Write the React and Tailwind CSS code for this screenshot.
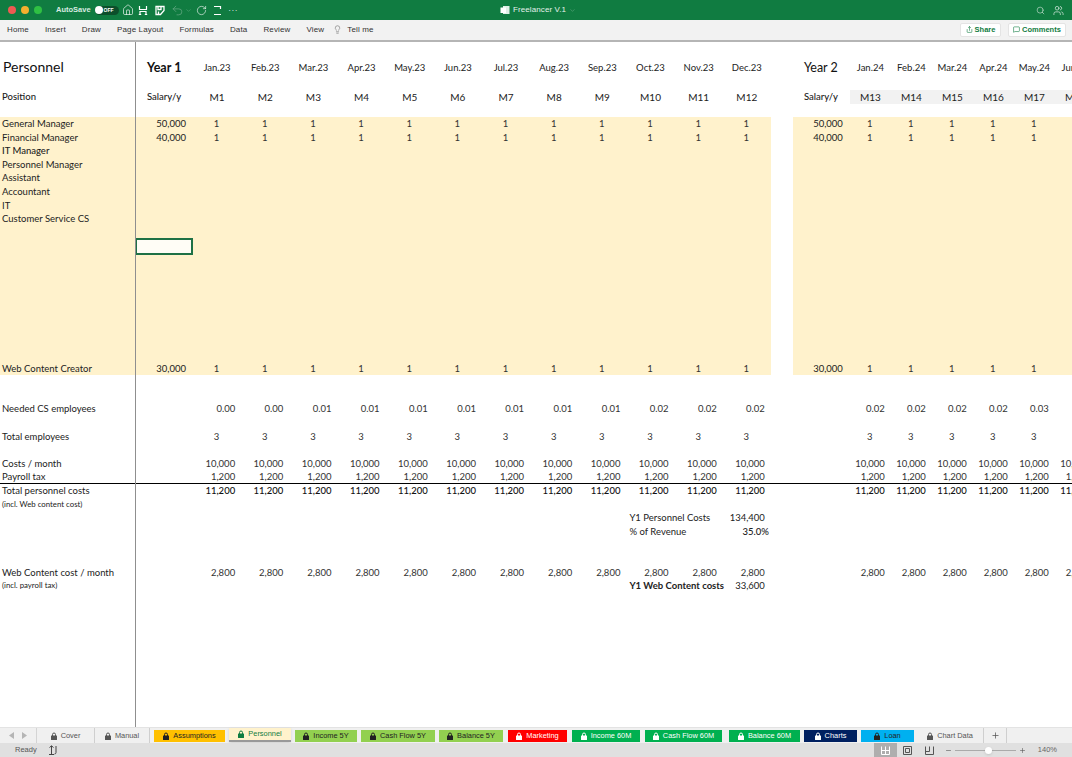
import React from "react";
import { Home, Undo2, RotateCw, ChevronDown, Search, Lightbulb, Plus, Minus, Share, MessageSquare, Users } from "lucide-react";

const y1Months = ["Jan.23", "Feb.23", "Mar.23", "Apr.23", "May.23", "Jun.23", "Jul.23", "Aug.23", "Sep.23", "Oct.23", "Nov.23", "Dec.23"];
const y2Months = ["Jan.24", "Feb.24", "Mar.24", "Apr.24", "May.24", "Jun.24"];
const ribbon = ["Home", "Insert", "Draw", "Page Layout", "Formulas", "Data", "Review", "View"];

const needed1 = ["0.00", "0.00", "0.01", "0.01", "0.01", "0.01", "0.01", "0.01", "0.01", "0.02", "0.02", "0.02"];
const needed2 = ["0.02", "0.02", "0.02", "0.02", "0.03", ""];

const gridCols = "grid grid-cols-[57px_repeat(12,48.17px)_22px_57px_repeat(6,41px)]";

const labels = [
  { text: "General Manager", yellow: true, salary: "50,000", ones: true },
  { text: "Financial Manager", yellow: true, salary: "40,000", ones: true },
  { text: "IT Manager", yellow: true, medium: true },
  { text: "Personnel Manager", yellow: true },
  { text: "Assistant", yellow: true },
  { text: "Accountant", yellow: true },
  { text: "IT", yellow: true },
  { text: "Customer Service CS", yellow: true },
  { yellow: true },
  { yellow: true, selected: true },
  ...Array.from({ length: 8 }, () => ({ yellow: true })),
  { text: "Web Content Creator", yellow: true, salary: "30,000", ones: true },
  {},
  {},
  { text: "Needed CS employees", y1: needed1, y2: needed2 },
  {},
  { text: "Total employees", fill: "3", center: true },
  {},
  { text: "Costs / month", fill: "10,000" },
  { text: "Payroll tax", fill: "1,200", line: true },
  { text: "Total personnel costs", fill: "11,200", strong: true },
  { text: "(incl. Web content cost)", small: true },
  { summary: ["Y1 Personnel Costs", "134,400"], medium: true },
  { summary: ["% of Revenue", "35.0%"], wide: true },
  {},
  {},
  { text: "Web Content cost / month", fill: "2,800" },
  { text: "(incl. payroll tax)", small: true, summary: ["Y1 Web Content costs", "33,600"], strongSummary: true },
];

const tabs = [
  { name: "Cover", w: "w-[58px]", ml: "ml-0", bg: "", text: "text-[#555]", border: "border-r border-[#cfcfcf]" },
  { name: "Manual", w: "w-[55px]", ml: "ml-0", bg: "", text: "text-[#555]", border: "border-r border-[#cfcfcf]" },
  { name: "Assumptions", w: "w-[71px]", ml: "ml-[4px]", bg: "bg-[#ffc000]", text: "text-[#222]" },
  { name: "Personnel", w: "w-[62px]", ml: "ml-[4px]", bg: "bg-[#fff2cc]", text: "text-[#107c41]", active: true },
  { name: "Income 5Y", w: "w-[62px]", ml: "ml-[4px]", bg: "bg-[#92d050]", text: "text-[#222]" },
  { name: "Cash Flow 5Y", w: "w-[74px]", ml: "ml-[4px]", bg: "bg-[#92d050]", text: "text-[#222]" },
  { name: "Balance 5Y", w: "w-[64px]", ml: "ml-[4px]", bg: "bg-[#92d050]", text: "text-[#222]" },
  { name: "Marketing", w: "w-[59px]", ml: "ml-[5px]", bg: "bg-[#ff0000]", text: "text-white" },
  { name: "Income 60M", w: "w-[68px]", ml: "ml-[5px]", bg: "bg-[#00b050]", text: "text-white" },
  { name: "Cash Flow 60M", w: "w-[77px]", ml: "ml-[5px]", bg: "bg-[#00b050]", text: "text-white" },
  { name: "Balance 60M", w: "w-[71px]", ml: "ml-[7px]", bg: "bg-[#00b050]", text: "text-white" },
  { name: "Charts", w: "w-[53px]", ml: "ml-[4px]", bg: "bg-[#002060]", text: "text-white" },
  { name: "Loan", w: "w-[53px]", ml: "ml-[4px]", bg: "bg-[#00b0f0]", text: "text-[#222]" },
  { name: "Chart Data", w: "w-[67px]", ml: "ml-[3px]", bg: "", text: "text-[#555]", border: "border-r border-[#cfcfcf]" },
];

const TabLock = () => (
  <svg width="6" height="8" viewBox="0 0 6 8" className="shrink-0">
    <path d="M1.500 4V2.500a1.500 1.500 0 0 1 3 0V4" fill="none" stroke="currentColor" strokeWidth="1" />
    <rect x="0" y="3.500" width="6" height="4.500" rx="0.5" fill="currentColor" />
  </svg>
);

const TitleBar = () => (
  <div className="h-[20px] bg-[#107c41] flex items-center text-white shrink-0 relative">
    <div className="flex items-center gap-[5px] pl-[8px]">
      <span className="w-[8px] h-[8px] rounded-full bg-[#ee5a52]" />
      <span className="w-[8px] h-[8px] rounded-full bg-[#f5b02e]" />
      <span className="w-[8px] h-[8px] rounded-full bg-[#2fc043]" />
    </div>
    <span className="ml-[14px] text-[7.5px] font-bold text-[#d8ebe0]">AutoSave</span>
    <div className="ml-[4px] w-[24px] h-[9px] rounded-full bg-[#0c4f2b] flex items-center">
      <span className="w-[8px] h-[8px] rounded-full bg-white" />
      <span className="ml-[1px] text-[5px] font-bold leading-none">OFF</span>
    </div>
    <Home className="ml-[3px]" size={12} strokeWidth={1.3} />
    <svg className="ml-[4px]" width="10" height="11" viewBox="0 0 10 11" fill="none" stroke="white" strokeWidth="1.2">
      <path d="M1.500 1v3.500h7V1M2 9.500V6.500h6v3M.8 9.500h2.400M6.800 9.500h2.400" />
    </svg>
    <svg className="ml-[7px]" width="10" height="11" viewBox="0 0 10 11" fill="none" stroke="white" strokeWidth="1.3">
      <path d="M1 1.500h8v4L5.500 9.500H1zM3 1.500v3h3v-3M3.500 9V6.500" />
    </svg>
    <Undo2 className="ml-[6px] text-[#6fae8c]" size={13} strokeWidth={1.2} />
    <ChevronDown className="ml-[1px] text-[#6fae8c]" size={7} strokeWidth={1.5} />
    <RotateCw className="ml-[4px]" size={11} strokeWidth={1.3} />
    <svg className="ml-[6px]" width="9" height="11" viewBox="0 0 9 11" fill="none" stroke="white" strokeWidth="1.2">
      <path d="M1 1.500h6.500v2.500M1 9.500h7" />
    </svg>
    <span className="ml-[7px] text-[8px] leading-none tracking-[1px] -mt-[3px]">...</span>
    <div className="absolute left-[500px] top-0 h-full flex items-center gap-[3px]">
      <svg width="10" height="10" viewBox="0 0 10 10">
        <rect x="3" y="1" width="6.5" height="8" fill="#dff0e6" />
        <rect x="0.5" y="2.5" width="5.5" height="5.5" fill="#ffffff" />
      </svg>
      <span className="text-[8px] text-[#e4f1ea] tracking-[0.1px]">Freelancer V.1</span>
      <ChevronDown className="text-[#5fa57f]" size={7} />
    </div>
    <div className="ml-auto flex items-center gap-[8px] pr-[8px]">
      <Search size={9} strokeWidth={1.3} />
      <Users size={11} strokeWidth={1.3} />
    </div>
  </div>
);

const Ribbon = () => (
  <div className="h-[22px] bg-[#f2f2f2] border-b-2 border-[#b5b5b5] flex items-center pb-[1px] pl-[7px] pr-[6px] shrink-0">
    <div className="flex items-center gap-[16px] text-[8px] tracking-[0.14px] text-[#333]">
      {ribbon.map((name) => (
        <span key={name}>{name}</span>
      ))}
    </div>
    <Lightbulb className="ml-[9px] text-[#555]" size={9} strokeWidth={1.3} />
    <span className="ml-[5px] text-[8px] tracking-[0.14px] text-[#333]">Tell me</span>
    <div className="ml-auto flex items-center gap-[7px] text-[7.5px] text-[#107c41] font-bold">
      <div className="w-[41px] h-[14px] bg-white rounded-[2px] border border-[#e4e4e4] flex items-center justify-center gap-[2px]">
        <Share size={7} />
        Share
      </div>
      <div className="w-[58px] h-[14px] bg-white rounded-[2px] border border-[#e4e4e4] flex items-center justify-center gap-[2px]">
        <MessageSquare size={7} />
        Comments
      </div>
    </div>
  </div>
);

const HeaderRows = () => (
  <div className={gridCols}>
    <div className="h-[48px] pl-[11px] pt-[20px] text-[12.5px] font-bold text-[#111] leading-none">Year 1</div>
    {y1Months.map((m) => (
      <div key={m} className="h-[48px] pt-[21px] text-center text-[9.5px] text-[#222] leading-none">{m}</div>
    ))}
    <div />
    <div className="h-[48px] pl-[11px] pt-[20px] text-[12.5px] text-[#111] leading-none">Year 2</div>
    {y2Months.map((m) => (
      <div key={m} className="h-[48px] pt-[21px] text-center text-[9.5px] text-[#222] leading-none whitespace-nowrap">{m}</div>
    ))}
    <div className="h-[14px] pl-[11px] text-[9.5px] leading-[14px] text-[#222] font-medium">Salary/y</div>
    {y1Months.map((m, i) => (
      <div key={m} className="h-[14px] text-center text-[10px] leading-[14px] text-[#222]">M{i + 1}</div>
    ))}
    <div />
    <div className="h-[14px] pl-[11px] text-[9.5px] leading-[14px] text-[#222] font-medium">Salary/y</div>
    {y2Months.map((m, i) => (
      <div key={m} className="h-[14px] bg-[#f2f2f2] text-center text-[10px] leading-[14px] text-[#222]">M{i + 13}</div>
    ))}
  </div>
);

// a cell in one of the month columns
const Cell = ({ row, value }) => {
  const bg = row.yellow ? "bg-[#fff2cc]" : "";
  const font = row.strong ? "font-medium text-[#111]" : "text-[#333]";
  if (row.ones || row.center) {
    return <div className={`${bg} ${font} text-center pr-[1px]`}>{value}</div>;
  }
  return <div className={`${bg} ${font} text-right pr-[6px] whitespace-nowrap`}>{value}</div>;
};

const SheetRow = ({ row }) => {
  const yellow = row.yellow ? "bg-[#fff2cc]" : "";
  const line = row.line ? "border-b border-black" : "";
  const val1 = (i) => (row.y1 ? row.y1[i] : row.ones ? "1" : row.fill || "");
  const val2 = (i) => (row.y2 ? row.y2[i] : row.ones ? "1" : row.fill || "");
  const isMonthRow = row.ones || row.fill || row.y1;

  return (
    <div className={`${gridCols} h-[13.6px] text-[9.5px] leading-[13px] box-border ${line}`}>
      <div className={`${yellow} relative text-right pr-[7px] text-[#222]`}>
        {row.salary}
        {row.selected && (
          <div className="absolute -left-px right-0 top-[-1px] bottom-[-2px] bg-[#fffdf6] border-2 border-[#1e7145] z-10" />
        )}
      </div>
      {row.summary ? (
        <>
          {Array.from({ length: 9 }, (_, i) => <div key={i} />)}
          <div className={`col-span-2 pl-[3px] whitespace-nowrap text-[#222] ${row.strongSummary ? "font-bold" : ""}`}>{row.summary[0]}</div>
          <div className={`text-right text-[#222] whitespace-nowrap ${row.wide ? "pr-[2px] font-medium" : "pr-[6px]"}`}>{row.summary[1]}</div>
        </>
      ) : (
        y1Months.map((m, i) => <Cell key={m} row={row} value={isMonthRow ? val1(i) : ""} />)
      )}
      <div />
      <div className={`${yellow} text-right pr-[7px] text-[#222]`}>{row.salary}</div>
      {y2Months.map((m, i) => (
        <Cell key={m} row={row} value={isMonthRow ? val2(i) : ""} />
      ))}
    </div>
  );
};

const LabelRow = ({ row }) => (
  <div
    className={`h-[13.6px] box-border pl-[2px] whitespace-nowrap leading-[13px] text-[#222] ${row.small ? "text-[7.8px]" : "text-[9.5px]"} ${
      row.yellow ? "bg-[#fff2cc]" : ""
    } ${row.line ? "border-b border-black" : ""} ${row.medium && row.text ? "font-medium" : ""}`}
  >
    {row.text}
  </div>
);

const Sheet = () => (
  <div className="flex-1 min-h-0 flex overflow-hidden bg-white font-['Lato',sans-serif]">
    <div className="w-[136px] shrink-0 border-r border-[#8f8f8f]">
      <div className="h-[48px] pl-[3px] pt-[18px] text-[14px] text-[#111] leading-none">Personnel</div>
      <div className="h-[14px] pl-[2px] text-[9.5px] leading-[14px] text-[#222] font-medium">Position</div>
      <div className="h-[13px]" />
      {labels.map((row, i) => (
        <LabelRow key={i} row={row} />
      ))}
    </div>
    <div className="flex-1 min-w-0 overflow-hidden">
      <HeaderRows />
      <div className="h-[13px]" />
      {labels.map((row, i) => (
        <SheetRow key={i} row={row} />
      ))}
    </div>
  </div>
);

const TabStrip = () => (
  <div className="h-[16px] bg-[#f0f0f0] flex items-center shrink-0 border-t border-[#e3e3e3] font-['Liberation_Sans',sans-serif]">
    <div className="w-[37px] h-full flex items-center justify-center gap-[8px] border-r border-[#d4d4d4]">
      <svg width="5" height="7" viewBox="0 0 5 7" fill="#b5b5b5"><path d="M5 0v7L0 3.500z" /></svg>
      <svg width="5" height="7" viewBox="0 0 5 7" fill="#b5b5b5"><path d="M0 0v7l5-3.500z" /></svg>
    </div>
    {tabs.map((t) => (
      <div
        key={t.name}
        className={`${t.w} ${t.ml} ${t.bg} ${t.text} ${t.border || ""} ${
          t.active ? "h-[14px] mb-[1px] border-b-2 border-[#999] shadow-sm" : t.bg ? "h-[12px]" : "h-full"
        } flex items-center justify-center gap-[4px] text-[7.4px] whitespace-nowrap`}
      >
        <TabLock />
        {t.name}
      </div>
    ))}
    <div className="w-[23px] h-full flex items-center justify-center text-[#555] border-r border-[#cfcfcf]">
      <Plus size={9} />
    </div>
  </div>
);

const StatusBar = () => (
  <div className="h-[14px] bg-[#e0e0e0] flex items-center text-[#555] shrink-0 font-['Liberation_Sans',sans-serif]">
    <span className="ml-[15px] text-[7.5px]">Ready</span>
    <svg className="ml-[11px]" width="10" height="10" viewBox="0 0 10 10" fill="none" stroke="#444" strokeWidth="1">
      <path d="M1 9.500h5M3.500 9.500V1M1.500 2.500L3.500 .8l2 1.700M8 1v6.500a1.500 1.500 0 0 1-1.500 1.500" />
    </svg>
    <div className="ml-auto h-full w-[23px] bg-[#aeaeae] flex items-center justify-center">
      <svg width="9" height="9" viewBox="0 0 9 9" fill="none" stroke="white" strokeWidth="1">
        <path d="M.5.5v8h8V.5M.5 4.500h8M4.500.5v8" />
      </svg>
    </div>
    <svg className="ml-[6px]" width="9" height="9" viewBox="0 0 9 9" fill="none" stroke="#555" strokeWidth="1">
      <path d="M.5.5h8v8h-8zM2.500 2.500h4v4h-4z" />
    </svg>
    <svg className="ml-[13px]" width="9" height="9" viewBox="0 0 9 9" fill="none" stroke="#555" strokeWidth="1">
      <path d="M.5.5v8h8V.5M.5 5.500h4V.5" />
    </svg>
    <Minus className="ml-[11px]" size={7} />
    <div className="ml-[3px] w-[61px] h-[1px] bg-[#aaa] relative">
      <span className="absolute left-[30px] -top-[3px] w-[7px] h-[7px] rounded-full bg-white shadow-sm" />
    </div>
    <Plus className="ml-[3px]" size={7} />
    <span className="ml-[12px] mr-[15px] text-[7.5px] text-[#666]">140%</span>
  </div>
);

export default function App() {
  return (
    <div className="h-screen w-full flex flex-col overflow-hidden font-['Liberation_Sans',sans-serif]">
      <TitleBar />
      <Ribbon />
      <Sheet />
      <TabStrip />
      <StatusBar />
    </div>
  );
}
